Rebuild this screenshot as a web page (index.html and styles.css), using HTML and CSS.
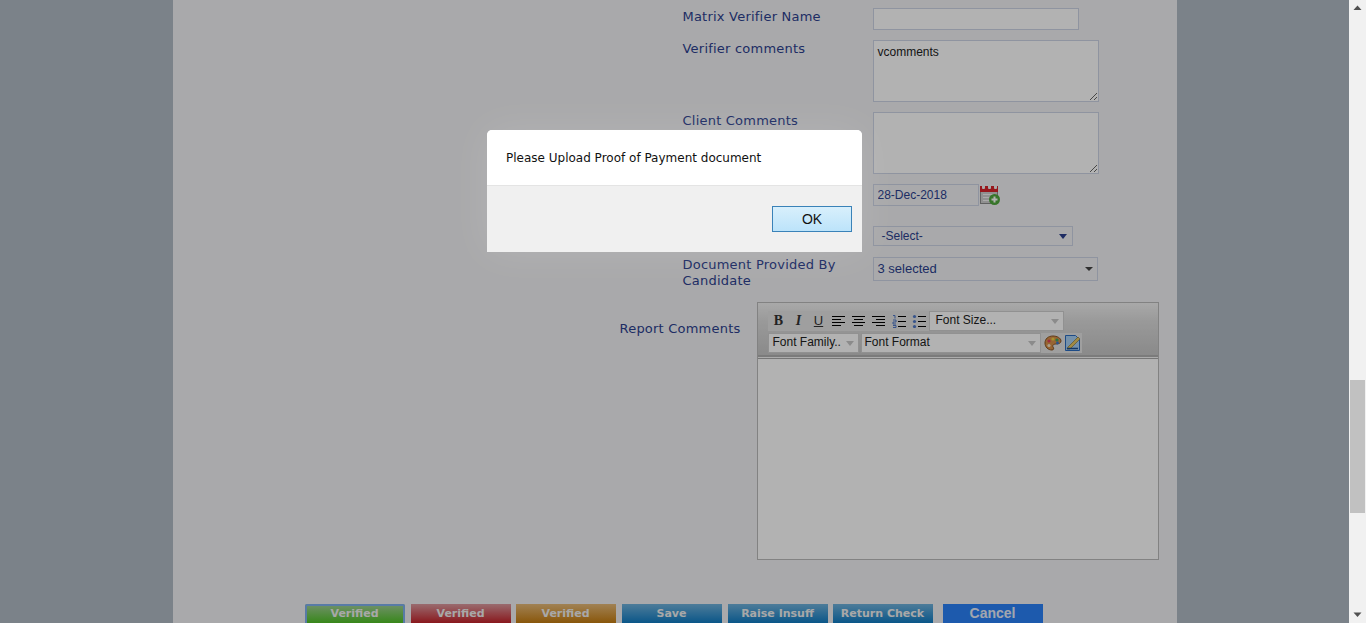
FILE: index.html
```html
<!DOCTYPE html>
<html lang="en">
<head>
<meta charset="utf-8">
<title>Verification</title>
<link rel="stylesheet" href="styles.css">
</head>
<body>
<div class="app">
  <div class="viewport">
    <main class="page">
      <div class="row"><label class="label">Matrix Verifier Name</label><input class="field field-name" type="text"></div>
      <div class="row"><label class="label">Verifier comments</label><textarea class="area">vcomments</textarea></div>
      <div class="row"><label class="label">Client Comments</label><textarea class="area"></textarea></div>
      <div class="row row-date"><label class="label">Date</label><input class="field field-date" type="text" value="28-Dec-2018">
        <svg class="cal" viewBox="0 0 20 21" width="20" height="21">
          <rect x=".5" y="2.500" width="17" height="17" fill="#cfcfcf" stroke="#8c8c8c"/>
          <rect x="0" y="2" width="18" height="6" fill="#d8232a"/>
          <rect x="2" y="0" width="3" height="5" rx="1" fill="#f4f4f4"/>
          <rect x="8" y="0" width="3" height="5" rx="1" fill="#f4f4f4"/>
          <rect x="14" y="0" width="3" height="5" rx="1" fill="#f4f4f4"/>
          <path d="M3 10.500h10M3 13.500h7M3 16.500h7" stroke="#f4f4f4" stroke-width="1"/>
          <circle cx="14.500" cy="15.500" r="5.500" fill="#4fa83d"/>
          <path d="M11.500 15.500h6M14.500 12.500v6" stroke="#fff" stroke-width="2"/>
        </svg>
      </div>
      <div class="row row-select"><label class="label">Status</label><div class="select select-a"><span>-Select-</span><i class="caret caret-blue"></i></div></div>
      <div class="row row-docs"><label class="label">Document Provided By Candidate</label><div class="select select-b"><span>3 selected</span><i class="caret caret-dark"></i></div></div>

      <div class="row-editor">
        <label class="label label-report">Report Comments</label>
        <div class="editor">
          <div class="toolbar">
            <div class="tool-line">
              <div class="tools">
                <b class="tool tool-b">B</b>
                <i class="tool tool-i">I</i>
                <u class="tool tool-u">U</u>
                <svg class="ico" viewBox="0 0 14 12" width="14" height="12"><path d="M0 1.500h13M0 4.500h9M0 7.500h13M0 10.500h9" stroke="#000" stroke-width="1.200"/></svg>
                <svg class="ico" viewBox="0 0 14 12" width="14" height="12"><path d="M0 1.500h13M2 4.500h9M0 7.500h13M2 10.500h9" stroke="#000" stroke-width="1.200"/></svg>
                <svg class="ico" viewBox="0 0 14 12" width="14" height="12"><path d="M0 1.500h13M4 4.500h9M0 7.500h13M4 10.500h9" stroke="#000" stroke-width="1.200"/></svg>
                <svg class="ico" viewBox="0 0 14 14" width="14" height="14"><path d="M1 1.500h2v3M1 6h3v2H1v2h3M1 11.500h3v2H1" stroke="#4f78c8" stroke-width="1" fill="none"/><path d="M6 2.500h8M6 7.500h8M6 12.500h8" stroke="#000" stroke-width="1"/></svg>
                <svg class="ico" viewBox="0 0 14 14" width="14" height="14"><circle cx="2.500" cy="2.500" r="1.600" fill="#4f78c8"/><circle cx="2.500" cy="7.500" r="1.600" fill="#4f78c8"/><circle cx="2.500" cy="12.500" r="1.600" fill="#4f78c8"/><path d="M6 2.500h8M6 7.500h8M6 12.500h8" stroke="#000" stroke-width="1"/></svg>
              </div>
              <div class="combo combo-size"><span>Font Size...</span><i class="caret caret-pale"></i></div>
            </div>
            <div class="tool-line">
              <div class="combo combo-family"><span>Font Family..</span><i class="caret caret-pale"></i></div>
              <div class="combo combo-format"><span>Font Format</span><i class="caret caret-pale"></i></div>
              <div class="icon-pair">
                <svg viewBox="0 0 18 16" width="18" height="16"><path d="M9 1C4 1 1 4 1 8c0 4 3 7 7 7 2 0 2-2 1-3-1-2 1-3 3-3 3 0 5-1 5-3 0-3-4-5-8-5z" fill="#d8914a" stroke="#8a5524" stroke-width="1"/><circle cx="5" cy="6" r="1.600" fill="#e0405a"/><circle cx="9" cy="4" r="1.600" fill="#f0d040"/><circle cx="13" cy="5" r="1.600" fill="#40a860"/><circle cx="13.500" cy="8" r="1.400" fill="#3c78d0"/><circle cx="5" cy="10.500" r="1.600" fill="#f4e4c8"/></svg>
                <svg viewBox="0 0 18 18" width="18" height="18"><path d="M1.500 1.500h10l4 4v11h-14z" fill="#a8d0f4" stroke="#2a6cc0" stroke-width="1"/><path d="M4 13l10-10 2 2-10 10-3 0z" fill="#e8c860" stroke="#7a6a30" stroke-width=".6"/><path d="M3 14.500h11" stroke="#1d4f90" stroke-width="1.500"/></svg>
              </div>
            </div>
          </div>
          <div class="editor-body"></div>
        </div>
      </div>

      <div class="actions">
        <button class="btn btn-green btn-focus" type="button">Verified</button>
        <button class="btn btn-red" type="button">Verified</button>
        <button class="btn btn-orange btn-tight" type="button">Verified</button>
        <button class="btn btn-blue" type="button">Save</button>
        <button class="btn btn-blue" type="button">Raise Insuff</button>
        <button class="btn btn-blue btn-tight" type="button">Return Check</button>
        <button class="btn btn-cancel" type="button">Cancel</button>
      </div>
    </main>

    <div class="overlay">
      <div class="modal" role="dialog">
        <div class="modal-body">Please Upload Proof of Payment document</div>
        <div class="modal-foot"><button class="ok" type="button">OK</button></div>
      </div>
    </div>
  </div>

  <div class="scrollbar">
    <svg class="arrow" viewBox="0 0 17 17" width="17" height="17"><path d="M8.500 5.500l4 4.500h-8z" fill="#505050"/></svg>
    <div class="track"><div class="thumb"></div></div>
    <svg class="arrow" viewBox="0 0 17 17" width="17" height="17"><path d="M4.500 6.500h8l-4 4.500z" fill="#505050"/></svg>
  </div>
</div>
</body>
</html>
```
FILE: styles.css
```css
* { box-sizing: border-box; }
html, body { margin: 0; height: 100%; overflow: hidden; }
body { font-family: "Liberation Sans", Arial, sans-serif; font-size: 12px; }

.app { display: flex; height: 623px; }
.viewport { position: relative; flex: 1; overflow: hidden; background: #b1bac4; }
.page {
  width: 1004px; height: 660px; margin: 0 auto;
  padding-top: 8px; background: #f2f3f5;
}

.row { display: flex; align-items: flex-start; padding-left: 510px; margin-bottom: 10px; }
.row-date { margin-bottom: 20px; }
.row-select { margin-bottom: 11px; }
.row-docs { margin-bottom: 13px; }

.label {
  flex: none; width: 190px; padding: 1px 30px 0 0;
  font-family: "DejaVu Sans", Verdana, sans-serif; font-size: 13px; line-height: 16px;
  color: #2d4190; letter-spacing: .22px;
}
.row-docs .label { padding-top: 0; }
.label-report { width: 137px; padding: 19px 0 0; }

.field, .area, .select {
  border: 1px solid #cdd4e6; background: #fff; color: #2b3f8f;
  font-family: "Liberation Sans", Arial, sans-serif; font-size: 12px;
}
.field { height: 22px; padding: 0 4px; outline: 0; }
.field-name { width: 206px; }
.field-date { width: 106px; background: #f2f3f5; }
.area { display: block; width: 226px; height: 62px; padding: 4px; margin: 0; color: #222; }
.cal { margin-left: 1px; }

.select { display: flex; align-items: center; justify-content: space-between; background: #f2f3f5; }
.select-a { width: 200px; height: 20px; padding: 0 5px 0 8px; }
.select-b { width: 225px; height: 24px; padding: 0 1px 2px 4px; font-size: 13px; }

.caret { flex: none; width: 0; height: 0; border-style: solid; border-color: transparent; border-width: 5px 4px 0; }
.caret-blue { border-top-color: #2b3f8f; }
.caret-dark { border-width: 4px 4.500px 0; border-top-color: #444; margin: 2px 3px 0 0; }
.caret-pale { border-top-color: #c8c8c8; }

.row-editor { display: flex; align-items: flex-start; padding-left: 447px; }
.editor { width: 402px; height: 258px; border: 1px solid #bbb; background: #f6f6f6; }
.toolbar {
  height: 54px; padding: 7px 10px 0; border-bottom: 2px solid #b0b0b0;
  background: linear-gradient(#f2f2f2, #dcdcdc 35%, #c6c6c6);
}
.tool-line { display: flex; align-items: center; height: 22px; }
.tools {
  display: flex; align-items: center; height: 20px; width: 161px;
  padding-left: 4px; background: #e4e4e4; gap: 6px;
}
.tool {
  flex: none; width: 14px; text-align: center; color: #333;
  font-family: "Liberation Serif", serif; font-size: 14px; line-height: 16px;
}
.tool-i { font-weight: 700; }
.tool-u { font-family: "Liberation Sans", sans-serif; font-size: 13px; }
.ico { flex: none; }

.combo {
  display: flex; align-items: center; justify-content: space-between; height: 20px;
  padding: 0 4px 2px; border: 1px solid #d0d0d0; background: #fff; color: #222;
  font-family: "Liberation Sans", sans-serif; font-size: 12px;
}
.combo .caret { margin-top: 2px; }
.combo-size { width: 135px; padding-left: 6px; }
.combo-family { width: 91px; }
.combo-format { width: 180px; margin-left: 2px; padding-left: 3px; }
.icon-pair {
  display: flex; align-items: center; justify-content: flex-end; gap: 2px;
  width: 41px; height: 20px; background: #e4e4e4;
}
.editor-body { height: 201px; margin-top: 1px; border-top: 1px solid #aaa; background: #fff; }

.actions { display: flex; gap: 6px; margin-top: 44px; padding-left: 132px; }
.btn {
  flex: none; width: 100px; height: 30px; padding: 0 0 11px; border: 0;
  color: #f1f1f1; font-family: "DejaVu Sans", Verdana, sans-serif;
  font-size: 11px; font-weight: 700; line-height: 19px;
}
.btn-tight { margin-left: -1px; }
.btn-green { background: linear-gradient(#a4d09a, #50c226 19px); }
.btn-red { background: linear-gradient(#dc9a9f, #c5232a 19px); }
.btn-orange { background: linear-gradient(#e6ba78, #c57c10 19px); }
.btn-blue { background: linear-gradient(#6fb2dc, #0f7cc4 19px); }
.btn-cancel {
  margin-left: 4px; background: #2a82f8;
  font-family: "Liberation Sans", sans-serif; font-size: 14px; padding-bottom: 12px; color: #e8eefa;
}
.btn-focus { outline: 2px solid #7fb0ee; outline-offset: -2px; border-radius: 2px; }

.overlay {
  position: absolute; inset: 0; display: flex; justify-content: center; align-items: flex-start;
  padding-top: 130px; background: rgba(0, 0, 0, .3);
}
.modal {
  width: 375px; height: 122px; background: #f0f0f0; border-radius: 5px 5px 0 0;
  box-shadow: 0 0 40px rgba(255, 255, 255, .12);
}
.modal-body {
  height: 56px; padding: 20px 0 0 19px; background: #fff; border-bottom: 1px solid #e4e4e4; border-radius: 5px 5px 0 0;
  font-family: "DejaVu Sans", Tahoma, sans-serif; font-size: 12px; line-height: 17px; color: #111;
}
.modal-foot { display: flex; justify-content: flex-end; padding: 20px 10px 0 0; }
.ok {
  width: 80px; height: 26px; padding: 0; border: 1px solid #3a82b8; background: linear-gradient(#d8effc, #bce3fa);
  font-family: "Liberation Sans", sans-serif; font-size: 14px; color: #111;
}

.scrollbar { flex: none; display: flex; flex-direction: column; width: 17px; background: #f1f1f1; }
.arrow { flex: none; }
.track { flex: 1; position: relative; padding-top: 363px; }
.thumb { width: 15px; height: 133px; margin-left: 1px; background: #c1c1c1; }
```
